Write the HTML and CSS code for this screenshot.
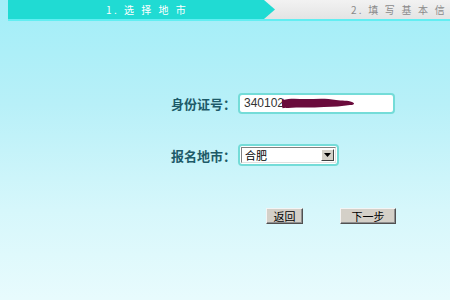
FILE: index.html
```html
<!DOCTYPE html>
<html lang="zh">
<head>
<meta charset="utf-8">
<link rel="stylesheet" href="styles.css">
</head>
<body>
<div class="page">
  <div class="steps">
    <div class="step step-active">1. 选 择 地 市</div>
    <div class="step step-next">2. 填 写 基 本 信</div>
  </div>
  <div class="form">
    <div class="row">
      <label class="label">身份证号：</label>
      <div class="field field-input">
        <span class="value">340102</span>
        <svg class="scribble" width="74" height="12" viewBox="0 0 74 12">
          <path d="M1 3 C8 1,16 2,24 2 C34 2,44 1,54 3 C60 4,66 3,70 5 C73 6,73 8,68 8 C60 9,52 10,42 10 C30 11,16 10,6 11 C2 11,0 9,1 6 Z" fill="#6a0b3c"/>
          <path d="M0 2 L2 11" stroke="#6a0b3c" stroke-width="3"/>
        </svg>
      </div>
    </div>
    <div class="row row-select">
      <label class="label">报名地市：</label>
      <div class="field field-select">
        <div class="select">
          <span class="value">合肥</span>
          <span class="drop"><svg width="7" height="4" viewBox="0 0 7 4"><path d="M0 0H7L3.5 4Z" fill="#000"/></svg></span>
        </div>
      </div>
    </div>
    <div class="buttons">
      <button class="btn btn-back">返回</button>
      <button class="btn btn-next">下一步</button>
    </div>
  </div>
</div>
</body>
</html>
```

FILE: styles.css
```css
html, body {
  margin: 0;
  padding: 0;
}
body {
  width: 450px;
  height: 300px;
  overflow: hidden;
  font-family: "Noto Sans CJK SC", "Liberation Sans", sans-serif;
  background: linear-gradient(to bottom, #a2eef8 0%, #b8f0f8 35%, #d6f7fb 70%, #e8fbfd 100%);
}
.page {
  height: 300px;
}
.steps {
  display: flex;
  height: 19px;
  margin-left: 8px;
  background: linear-gradient(to bottom, #f2f2f2, #e4e4e4);
  border-bottom: 2px solid #62eef2;
  overflow: hidden;
}
.step {
  font-size: 10px;
  line-height: 19px;
  white-space: nowrap;
  letter-spacing: 2.5px;
}
.step-active {
  flex: 0 0 267px;
  background: #20dbd3;
  color: #ffffff;
  padding-left: 98px;
  box-sizing: border-box;
  clip-path: polygon(0 0, 256px 0, 267px 50%, 256px 100%, 0 100%);
}
.step-next {
  flex: 1;
  color: #8a8a8a;
  padding-left: 76px;
  letter-spacing: 2.2px;
}
.form {
  padding-top: 71px;
}
.row {
  display: flex;
  align-items: center;
  height: 22px;
}
.row-select {
  margin-top: 30px;
}
.label {
  width: 238px;
  box-sizing: border-box;
  text-align: right;
  padding-right: 2px;
  font-size: 13px;
  font-weight: bold;
  color: #1d5a68;
  white-space: nowrap;
}
.field {
  box-sizing: border-box;
  border: 2px solid #74dcd8;
  border-radius: 4px;
  background: #ffffff;
  display: flex;
  align-items: center;
}
.field-input {
  width: 157px;
  height: 21px;
  padding-left: 4px;
}
.value {
  font-family: "Liberation Sans", "Noto Sans CJK SC", sans-serif;
  font-size: 12px;
  color: #333;
}
.scribble {
  margin-left: -2px;
}
.field-select {
  width: 101px;
  height: 22px;
  padding: 1px;
  background: #ffffff;
}
.select {
  flex: 1;
  height: 16px;
  box-sizing: border-box;
  border-top: 1px solid #808080;
  border-left: 1px solid #808080;
  border-right: 1px solid #e0e0e0;
  border-bottom: 1px solid #e0e0e0;
  display: flex;
  align-items: center;
  justify-content: space-between;
  padding-left: 3px;
}
.select .value {
  font-family: "Noto Sans CJK SC", sans-serif;
  font-size: 11px;
  color: #000;
}
.drop {
  width: 13px;
  height: 12px;
  margin-right: 1px;
  box-sizing: border-box;
  background: #d4d0c8;
  border-top: 1px solid #ffffff;
  border-left: 1px solid #ffffff;
  border-right: 1px solid #404040;
  border-bottom: 1px solid #404040;
  display: flex;
  align-items: center;
  justify-content: center;
}
.buttons {
  display: flex;
  gap: 37px;
  margin-top: 42px;
  padding-left: 266px;
}
.btn {
  height: 16px;
  padding: 0;
  font-family: "Noto Sans CJK SC", sans-serif;
  font-size: 11px;
  line-height: 12px;
  color: #000;
  background: #d4d0c8;
  border-top: 1px solid #f4f4f4;
  border-left: 1px solid #f4f4f4;
  border-right: 1px solid #505050;
  border-bottom: 1px solid #505050;
  box-shadow: inset -1px -1px 0 #909090;
}
.btn-back {
  width: 37px;
}
.btn-next {
  width: 56px;
}
```
